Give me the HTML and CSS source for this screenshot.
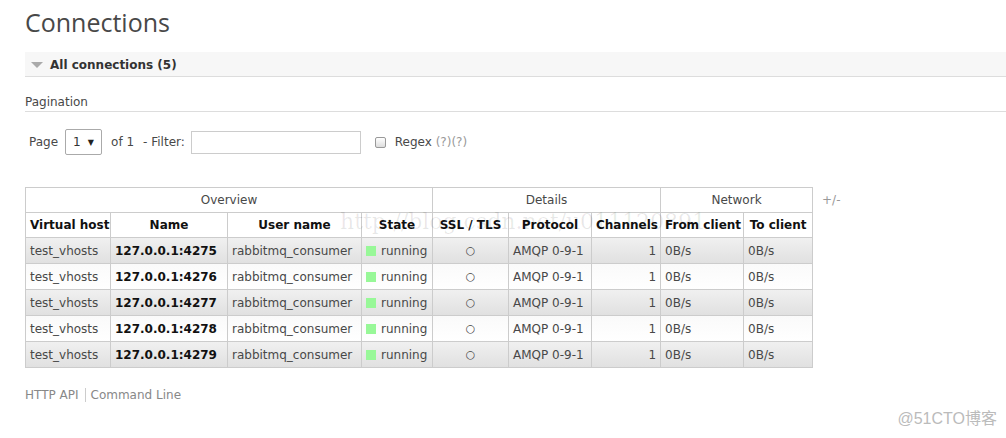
FILE: index.html
```html
<!DOCTYPE html>
<html lang="en">
<head>
    <meta charset="UTF-8">
    <title>Connections</title>
    <link rel="stylesheet" href="styles.css">
</head>
<body>
    <div class="main">
        <h1>Connections</h1>

        <div class="section">
            <h2><span class="arrow"></span>All connections (5)</h2>
        </div>

        <h3 class="pagination-title">Pagination</h3>

        <div class="filter-row">
            <label>Page</label>
            <div class="select">1 <span class="caret">&#9660;</span></div>
            <span>of 1</span>
            <label>- Filter:</label>
            <input type="text" class="filter-input">
            <span class="check"></span>
            <label>Regex <span class="help">(?)(?)</span></label>
        </div>

        <div class="table-wrap">
            <table class="list">
                <colgroup>
                    <col class="c1"><col class="c2"><col class="c3"><col class="c4"><col class="c5">
                    <col class="c6"><col class="c7"><col class="c8"><col class="c9">
                </colgroup>
                <thead>
                    <tr class="group">
                        <th colspan="4">Overview</th>
                        <th colspan="3">Details</th>
                        <th colspan="2">Network</th>
                    </tr>
                    <tr class="heads">
                        <th>Virtual host</th>
                        <th>Name</th>
                        <th>User name</th>
                        <th>State</th>
                        <th>SSL / TLS</th>
                        <th>Protocol</th>
                        <th>Channels</th>
                        <th>From client</th>
                        <th>To client</th>
                    </tr>
                </thead>
                <tbody>
                    <tr class="alt1">
                        <td>test_vhosts</td><td class="name">127.0.0.1:4275</td><td>rabbitmq_consumer</td>
                        <td><span class="state"></span>running</td><td class="c">&#9675;</td><td>AMQP 0-9-1</td>
                        <td class="r">1</td><td>0B/s</td><td>0B/s</td>
                    </tr>
                    <tr class="alt2">
                        <td>test_vhosts</td><td class="name">127.0.0.1:4276</td><td>rabbitmq_consumer</td>
                        <td><span class="state"></span>running</td><td class="c">&#9675;</td><td>AMQP 0-9-1</td>
                        <td class="r">1</td><td>0B/s</td><td>0B/s</td>
                    </tr>
                    <tr class="alt1">
                        <td>test_vhosts</td><td class="name">127.0.0.1:4277</td><td>rabbitmq_consumer</td>
                        <td><span class="state"></span>running</td><td class="c">&#9675;</td><td>AMQP 0-9-1</td>
                        <td class="r">1</td><td>0B/s</td><td>0B/s</td>
                    </tr>
                    <tr class="alt2">
                        <td>test_vhosts</td><td class="name">127.0.0.1:4278</td><td>rabbitmq_consumer</td>
                        <td><span class="state"></span>running</td><td class="c">&#9675;</td><td>AMQP 0-9-1</td>
                        <td class="r">1</td><td>0B/s</td><td>0B/s</td>
                    </tr>
                    <tr class="alt1">
                        <td>test_vhosts</td><td class="name">127.0.0.1:4279</td><td>rabbitmq_consumer</td>
                        <td><span class="state"></span>running</td><td class="c">&#9675;</td><td>AMQP 0-9-1</td>
                        <td class="r">1</td><td>0B/s</td><td>0B/s</td>
                    </tr>
                </tbody>
            </table>
            <span class="toggle">+/-</span>
        </div>

        <div class="footer">
            <a>HTTP API</a><a class="sep">Command Line</a>
        </div>
    </div>

    <!-- watermarks -->
    <div class="wm-url">http://blog.csdn.net/u011120891</div>
    <div class="wm-corner">@51CTO博客</div>
</body>
</html>
```

FILE: styles.css
```css
* {
    box-sizing: border-box;
    margin: 0;
    padding: 0;
}

body {
    font-family: 'DejaVu Sans', Verdana, sans-serif;
    font-size: 12px;
    color: #484848;
    background: #fff;
    width: 1006px;
    height: 438px;
    overflow: hidden;
    position: relative;
}

.main {
    padding-left: 25px;
}

h1 {
    font-family: 'Open Sans', sans-serif;
    font-weight: 400;
    font-size: 25px;
    color: #484848;
    height: 52px;
    line-height: 44px;
}

.section h2 {
    height: 25px;
    background: #f7f7f7;
    border-bottom: 1px solid #ddd;
    font-size: 12px;
    font-weight: bold;
    color: #333;
    display: flex;
    align-items: center;
    padding-left: 6px;
    padding-top: 2px;
}

.arrow {
    width: 0;
    height: 0;
    border-left: 6px solid transparent;
    border-right: 6px solid transparent;
    border-top: 6px solid #aaa;
    margin-right: 7px;
}

.pagination-title {
    font-size: 12px;
    font-weight: normal;
    color: #484848;
    margin-top: 16px;
    height: 19px;
    line-height: 19px;
    border-bottom: 1px solid #ddd;
}

.filter-row {
    display: flex;
    align-items: center;
    margin-top: 17px;
    padding-left: 4px;
    height: 26px;
}

.filter-row label,
.filter-row span {
    margin-right: 9px;
}

.select {
    width: 37px;
    height: 26px;
    border: 1px solid #aaa;
    border-radius: 2px;
    display: flex;
    align-items: center;
    padding-left: 7px;
    margin-right: 9px;
    margin-left: -2px;
    color: #333;
}

.select .caret {
    font-size: 8px;
    margin-left: 7px;
    margin-right: 0;
    color: #222;
}

.filter-input {
    width: 170px;
    height: 23px;
    border: 1px solid #ccc;
    margin-left: -3px;
    margin-right: 14px;
}

.filter-row .check {
    width: 11px;
    height: 11px;
    border: 1px solid #999;
    border-radius: 2px;
    background: linear-gradient(#fff, #ddd);
    margin-right: 9px;
}

.help {
    color: #999;
}

.table-wrap {
    display: flex;
    align-items: flex-start;
    margin-top: 32px;
}

table.list {
    border-collapse: collapse;
    table-layout: fixed;
    width: 787px;
    color: #484848;
}

.c1 { width: 85px; }
.c2 { width: 117px; }
.c3 { width: 134px; }
.c4 { width: 71px; }
.c5 { width: 76px; }
.c6 { width: 83px; }
.c7 { width: 69px; }
.c8 { width: 83px; }
.c9 { width: 69px; }

table.list th,
table.list td {
    border: 1px solid #ccc;
    padding: 0 4px;
    white-space: nowrap;
    overflow: hidden;
}

tr.group th {
    height: 25px;
    font-weight: normal;
    text-align: center;
}

tr.heads th {
    height: 25px;
    font-weight: bold;
    color: #111;
    text-align: center;
}

tbody td {
    height: 26px;
}

tr.alt1 {
    background: linear-gradient(#f0f0f0, #e0e0e0);
}

tr.alt2 {
    background: linear-gradient(#fafafa, #fff);
}

td.name {
    font-weight: bold;
    color: #111;
}

td.c {
    text-align: center;
    font-size: 11px;
}

td.r {
    text-align: right;
}

.state {
    display: inline-block;
    width: 10px;
    height: 10px;
    background: #98f898;
    margin-right: 5px;
    vertical-align: -1px;
}

.toggle {
    color: #999;
    margin-left: 9px;
    margin-top: 6px;
}

.footer {
    margin-top: 20px;
    color: #888;
}

.footer .sep {
    border-left: 1px solid #ccc;
    padding-left: 5px;
    margin-left: 6px;
}

.wm-url {
    position: absolute;
    left: 340px;
    top: 209px;
    font-family: 'DejaVu Serif', serif;
    font-size: 22px;
    color: rgba(0, 0, 0, 0.09);
    pointer-events: none;
}

.wm-corner {
    position: absolute;
    right: 9px;
    bottom: 9px;
    font-family: 'Liberation Sans', 'Noto Sans CJK SC', sans-serif;
    font-size: 16px;
    color: #bbb;
}
```
